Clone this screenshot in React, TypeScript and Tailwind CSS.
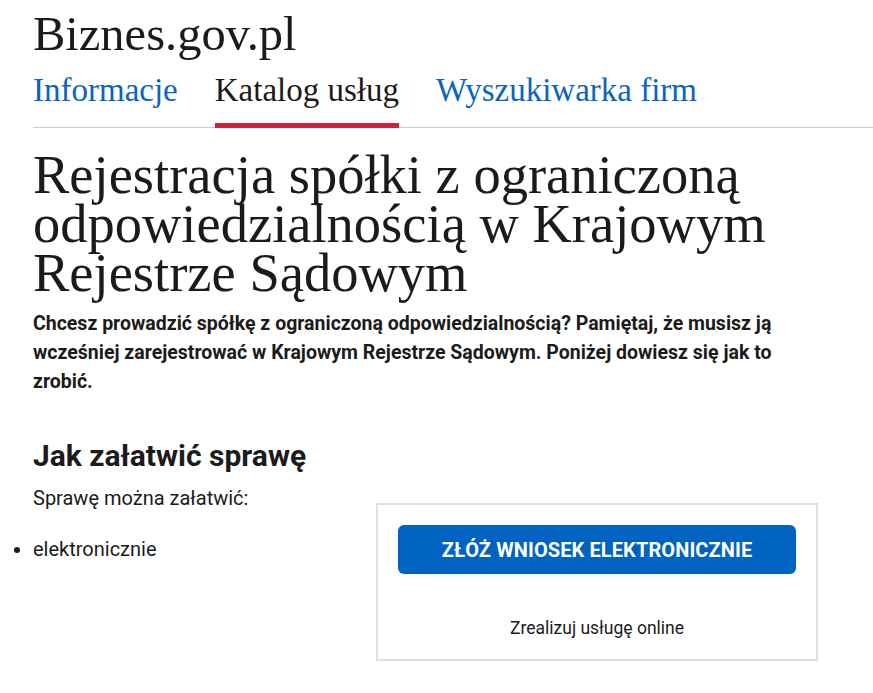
import React from "react";

export default function App() {
  const serif = { fontFamily: '"Liberation Serif", "DejaVu Serif", serif' };
  return (
    <div className="min-h-[693px] bg-white text-[#1b1b1b]" style={{ fontFamily: 'Roboto, "Liberation Sans", sans-serif' }}>
      <div className="pl-[33px]">
        <div className="pt-[6px] text-[48.5px] leading-[56px] text-[#1b1b1b]" style={serif}>
          Biznes.gov.pl
        </div>
        <nav className="flex gap-[37px] border-b border-[#cccccc] mt-[8px] text-[33px] leading-[40px]" style={serif}>
          <a className="pb-[17px] text-[#0b64c0]">Informacje</a>
          <a className="pb-[12px] text-[#1b1b1b] border-b-[5px] border-[#d21f3c] -mb-px">Katalog usług</a>
          <a className="pb-[17px] text-[#0b64c0]">Wyszukiwarka firm</a>
        </nav>
        <h1 className="mt-[22px] text-[54.5px] leading-[49px] text-[#1b1b1b] pr-[60px]" style={serif}>
          Rejestracja spółki z ograniczoną odpowiedzialnością w Krajowym Rejestrze Sądowym
        </h1>
        <p className="mt-[12px] text-[19.5px] leading-[29px] font-bold pr-[60px]">
          Chcesz prowadzić spółkę z ograniczoną odpowiedzialnością? Pamiętaj, że musisz ją wcześniej zarejestrować w Krajowym Rejestrze Sądowym. Poniżej dowiesz się jak to zrobić.
        </p>
        <h2 className="mt-[42px] text-[30px] leading-[36px] font-bold">Jak załatwić sprawę</h2>
        <p className="mt-[10px] text-[20px] leading-[28px]">Sprawę można załatwić:</p>
        <div className="flex">
          <ul className="list-disc w-[343px] mt-[23px] text-[20px] leading-[28px]">
            <li>elektronicznie</li>
          </ul>
          <div className="mt-[-9px] w-[442px] h-[158px] border-2 border-[#e0e0e0] px-[20px] pt-[20px] flex flex-col items-center">
            <button className="w-full h-[49px] rounded-[6px] bg-[#0062c1] text-white font-bold text-[20px] tracking-[0.1px]">
              ZŁÓŻ WNIOSEK ELEKTRONICZNIE
            </button>
            <div className="mt-[42px] text-[17.5px] leading-[24px] text-[#1b1b1b]">Zrealizuj usługę online</div>
          </div>
        </div>
      </div>
    </div>
  );
}
